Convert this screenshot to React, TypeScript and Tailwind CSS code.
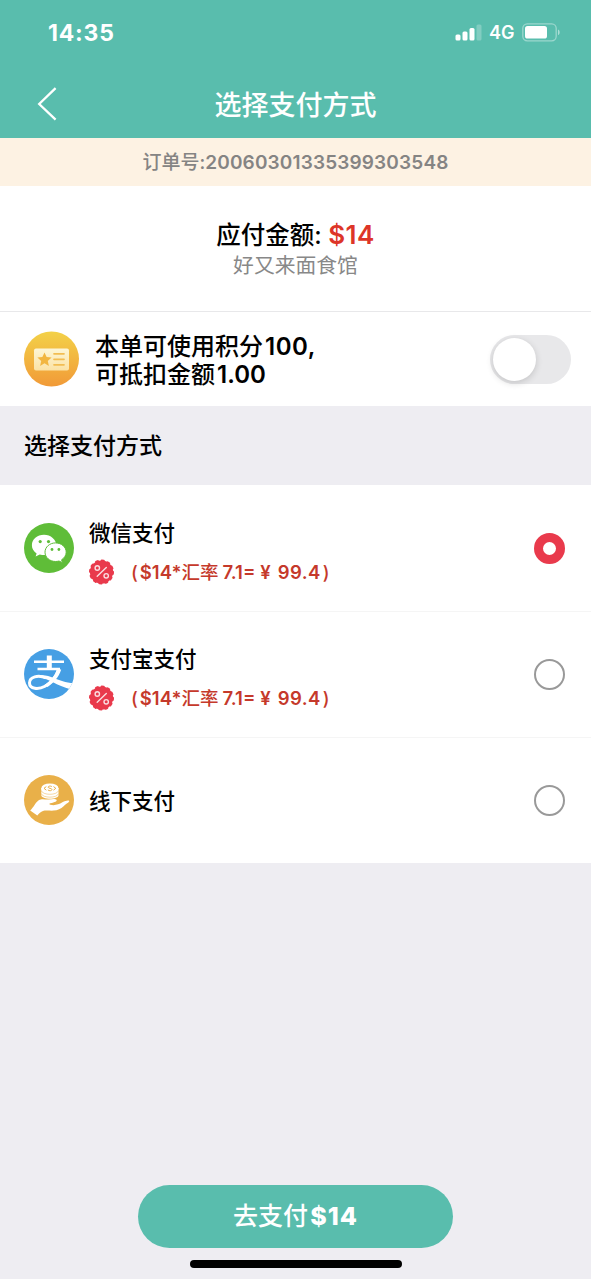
import { useState } from 'react';
import type { ReactNode } from 'react';
import clsx from 'clsx';

type Method = {
  id: string;
  name: string;
  icon: ReactNode;
  rate: boolean;
};

function StatusBar() {
  return (
    <div className="flex h-[64px] items-center justify-between pl-[48px] pr-[30px]">
      <span className="pt-px text-[23px] font-bold leading-[30px] tracking-[0.8px]">14:35</span>
      <div className="flex items-center">
        <svg width="27" height="17" viewBox="0 0 27 17" fill="#fff">
          <rect x="0.5" y="10.5" width="5" height="6" rx="1.5" />
          <rect x="7.5" y="7.5" width="5" height="9" rx="1.5" />
          <rect x="14.5" y="4" width="5" height="12.5" rx="1.5" />
          <rect x="21.5" y="0.5" width="5" height="16" rx="1.5" opacity="0.25" />
        </svg>
        <span className="ml-[7px] w-[27px] pt-[2px] text-[18px] font-semibold leading-[24px]">4G</span>
        <svg className="ml-[6px]" width="39" height="19" viewBox="0 0 39 19">
          <rect x="0.8" y="0.8" width="33.4" height="17" rx="4.5" fill="none" stroke="#fff" strokeOpacity="0.4" strokeWidth="1.3" />
          <rect x="3" y="3" width="22" height="12.6" rx="2.6" fill="#fff" />
          <path d="M36 6.5c2.2.8 2.2 4.8 0 5.6z" fill="#fff" fillOpacity="0.5" />
        </svg>
      </div>
    </div>
  );
}

function NavBar({ title }: { title: string }) {
  return (
    <div className="grid h-[74px] grid-cols-[80px_1fr_80px] items-center">
      <button className="pl-[37px] pt-[5px]" aria-label="返回">
        <svg width="21" height="34" viewBox="0 0 21 34" fill="none" stroke="#fff" strokeWidth="2.3">
          <path d="M18.6 1.2 2.2 17l16.4 15.6" />
        </svg>
      </button>
      <h1 className="pt-[10px] text-center text-[27px] font-medium leading-[36px]">{title}</h1>
    </div>
  );
}

function PointsIcon() {
  return (
    <svg className="shrink-0" width="56" height="56" viewBox="0 0 56 56">
      <defs>
        <linearGradient id="points" x1="0" y1="0" x2="0" y2="1">
          <stop offset="0" stopColor="#f3d148" />
          <stop offset="1" stopColor="#f19a38" />
        </linearGradient>
        <linearGradient id="card" x1="0" y1="0" x2="0" y2="1">
          <stop offset="0" stopColor="#fdf6d6" />
          <stop offset="1" stopColor="#fbe2a4" />
        </linearGradient>
      </defs>
      <circle cx="28.5" cy="28" r="27.5" fill="url(#points)" />
      <rect x="11" y="17.5" width="35" height="22" rx="2" fill="url(#card)" />
      <path
        d="m21.5 21.400 2.100 4.600 5 .5-3.800 3.400 1.100 5-4.400-2.600-4.400 2.600 1.100-5-3.800-3.400 5-.5z"
        fill="#f2b640"
      />
      <path d="M31 22.800h10M31 28.300h10M31 33.800h10" stroke="#f2bd52" strokeWidth="1.7" strokeLinecap="round" />
    </svg>
  );
}

function WechatIcon() {
  return (
    <svg width="50" height="50" viewBox="0 0 50 50">
      <circle cx="25" cy="25" r="25" fill="#5fbd38" />
      <path
        d="M20 11.800c-6.800 0-12.100 4.600-12.100 10.500 0 3.400 1.700 6.200 4.700 8.100l-1 3.100 4.200-2.100c1.500.4 3 .6 4.600.6 6.600 0 11.900-4.300 11.900-9.800S26.800 11.800 20 11.800z"
        fill="#fff"
      />
      <path
        d="M31.600 19.900c-5.900 0-10.600 4.100-10.600 9.300s4.700 9.300 10.600 9.300c1.200 0 2.300-.2 3.400-.5l3.500 1.700-.9-2.900c2.600-1.700 4.600-4.500 4.600-7.600 0-5.200-4.700-9.300-10.600-9.300z"
        fill="#fff"
        stroke="#5fbd38"
        strokeWidth="1"
      />
      <g fill="#5fbd38">
        <circle cx="16.200" cy="18.600" r="1.600" />
        <circle cx="24.500" cy="18.600" r="1.600" />
        <circle cx="28" cy="26.500" r="1.400" />
        <circle cx="34.900" cy="26.500" r="1.400" />
      </g>
    </svg>
  );
}

function AlipayIcon() {
  return (
    <svg className="mb-px" width="50" height="50" viewBox="0 0 50 50">
      <defs>
        <clipPath id="disc">
          <circle cx="25" cy="25" r="25" />
        </clipPath>
      </defs>
      <circle cx="25" cy="25" r="25" fill="#469fe4" />
      <g clipPath="url(#disc)">
        <g fill="none" stroke="#fff">
          <path d="M25.300 6.500v13" strokeWidth="5" />
          <path d="M10 12.800h30M13.500 19.900h22.500" strokeWidth="2.500" />
          <path d="M34.800 19.800C32.500 27 27 34 21 37.300c-6.500 3.500-15.500 3-15.500-3.300 0-6 8.500-8.500 16.500-5" strokeWidth="3" />
        </g>
        <path d="M33 20.500h4.200C35 28 29 34.500 23.500 38l-3-2C26.500 32 31 26.500 33 20.500z" fill="#fff" />
        <path d="M12 27.700c5-2.700 11.500-1.500 18 1.300 6 2.600 11 4.500 20 5.200l-3 6.300c-7.500-2-13-4.700-18-7.200-6-3-11-5.400-17-5.600z" fill="#fff" />
      </g>
    </svg>
  );
}

function OfflineIcon() {
  return (
    <svg className="mb-px" width="50" height="50" viewBox="0 0 50 50">
      <circle cx="25" cy="25" r="25" fill="#e9b049" />
      <path d="M17.3 13v7c0 5 17.2 5 17.2 0v-7z" fill="#fff" />
      <ellipse cx="25.9" cy="13.400" rx="8.600" ry="5" fill="#fff" />
      <g fill="none" stroke="#e9b049">
        <path d="M17.300 15.700c1.500 4.800 15.700 4.800 17.200 0M17.300 18.700c1.500 4.600 15.700 4.600 17.200 0" strokeWidth="0.500" />
        <path
          d="m22.300 11.600-2.300 1.700 2.300 1.900M29.500 11.600l2.300 1.700-2.300 1.900M28 11.800c-1.200-1.300-4-.7-3.800.5.2 1.300 3.700.8 3.700 2.200s-2.700 1.700-4 .4"
          strokeWidth="1"
        />
      </g>
      <path
        d="M6.200 35.500c3.500-3 5.300-8.200 8.500-10.200 3.500-2.200 6.500-.5 10-.8 3.500-.2 6.700-.9 7.800.3 1 1.400-1.500 2.600-6.300 3.500-1 .2-1.100 1.200.2 1.500 4.800 1 8.300-.4 12-2.500 2.800-1.600 6.300-2.400 6.800-1.300.4 1-2.700 2.600-5.300 4.900-3.300 2.900-6.100 4.400-10.400 4.700-4.300.2-7.700-.7-10.500.3-2.300.9-3.900 2.300-5.700 4.700z"
        fill="#fff"
      />
    </svg>
  );
}

function PercentBadge() {
  return (
    <svg width="25" height="26" viewBox="0.5 0 25 26">
      <circle cx="13" cy="13" r="11.600" fill="#e93a4c" />
      <circle cx="13" cy="13" r="11.300" fill="none" stroke="#e93a4c" strokeWidth="2.400" strokeLinecap="round" strokeDasharray="1.800 4.117" />
      <g fill="none" stroke="#fbdde0" strokeWidth="1.400">
        <circle cx="8.800" cy="9" r="2.200" />
        <circle cx="17.700" cy="16.800" r="2.200" />
        <path d="M17.800 8.500 8.700 17.300" strokeLinecap="round" />
      </g>
    </svg>
  );
}

const methods: Method[] = [
  { id: 'wechat', name: '微信支付', icon: <WechatIcon />, rate: true },
  { id: 'alipay', name: '支付宝支付', icon: <AlipayIcon />, rate: true },
  { id: 'offline', name: '线下支付', icon: <OfflineIcon />, rate: false },
];

function RateNote() {
  return (
    <div className="mt-[11px] flex h-[26px] items-center whitespace-nowrap text-[#c5392b]">
      <PercentBadge />
      <p className="ml-[17px] text-[18.5px] font-medium leading-[26px]">
        <span>(</span>
        <span className="ml-[2px] font-semibold">$14*</span>汇率
        <span className="ml-[4px] font-semibold">7.1=</span>
        <span className="ml-[5px] font-semibold">¥</span>
        <span className="ml-[7px] font-semibold tracking-[0.4px]">99.4</span>
        <span className="ml-[2px]">)</span>
      </p>
    </div>
  );
}

export default function App() {
  const [selected, setSelected] = useState('wechat');
  const [usePoints, setUsePoints] = useState(false);

  return (
    <div className="flex h-[1279px] w-[591px] flex-col overflow-hidden bg-[#eeedf2] font-[Inter,'Noto_Sans_CJK_SC',sans-serif] text-black">
      <header className="h-[138px] bg-[#59bdad] text-white">
        <StatusBar />
        <NavBar title="选择支付方式" />
      </header>

      <div className="h-[48px] bg-[#fdf2e3] pt-[11px] text-center text-[19px] font-medium leading-[28px] text-[#858483]">
        订单号:<span className="font-semibold tracking-[0.15px]">20060301335399303548</span>
      </div>

      <section className="h-[126px] border-b border-[#e8e8ea] bg-white pt-[33px] text-center">
        <p className="text-[24.5px] font-medium leading-[32px]">
          应付金额: <span className="text-[26px] font-semibold tracking-[0.4px] text-[#dd3528]">$14</span>
        </p>
        <p className="text-[20.8px] leading-[29px] text-[#888]">好又来面食馆</p>
      </section>

      <section className="flex h-[94px] items-center bg-white pl-[23px] pr-[20px]">
        <PointsIcon />
        <p className="ml-[16px] flex-1 pt-[3px] text-[24px] font-medium leading-[28px]">
          本单可使用积分<span className="ml-[2px] font-semibold tracking-[0.5px]">100,</span>
          <br />
          可抵扣金额<span className="ml-[2px] font-semibold">1.00</span>
        </p>
        <button
          role="switch"
          aria-checked={usePoints}
          onClick={() => setUsePoints(!usePoints)}
          className={clsx(
            'flex h-[49px] w-[81px] items-center rounded-full px-[3px]',
            usePoints ? 'justify-end bg-[#59bdad]' : 'justify-start bg-[#e8e8ea]'
          )}
        >
          <span className="size-[43px] rounded-full bg-white shadow-[0_2px_7px_rgba(0,0,0,0.16)]" />
        </button>
      </section>

      <h2 className="h-[79px] pl-[24px] pt-[24px] text-[23px] font-medium leading-[32px]">选择支付方式</h2>

      <ul className="bg-white">
        {methods.map((m, i) => (
          <li
            key={m.id}
            onClick={() => setSelected(m.id)}
            className={clsx(
              'flex items-center pl-[24px] pr-[26px]',
              i === 0 ? 'h-[127px]' : i === 1 ? 'h-[126px]' : 'h-[125px]',
              i < methods.length - 1 && 'border-b border-[#f5f5f5]'
            )}
          >
            {m.icon}
            <div className={clsx('ml-[15px] flex-1', m.rate && 'pt-[6px]')}>
              <p className="text-[21.5px] font-medium leading-[30px]">{m.name}</p>
              {m.rate && <RateNote />}
            </div>
            <span
              className={clsx(
                'size-[31px] rounded-full bg-white',
                selected === m.id ? 'border-[9px] border-[#e93a4c]' : 'border-2 border-[#999]'
              )}
            />
          </li>
        ))}
      </ul>

      <footer className="mt-auto flex flex-col items-center pb-[11px]">
        <button className="h-[63px] w-[315px] rounded-full bg-[#59bdad] text-[25px] font-medium leading-[63px] text-white">
          去支付<span className="ml-[2px] font-extrabold tracking-[1px]">$14</span>
        </button>
        <div className="mt-[12px] h-[8px] w-[212px] rounded-full bg-black" />
      </footer>
    </div>
  );
}
